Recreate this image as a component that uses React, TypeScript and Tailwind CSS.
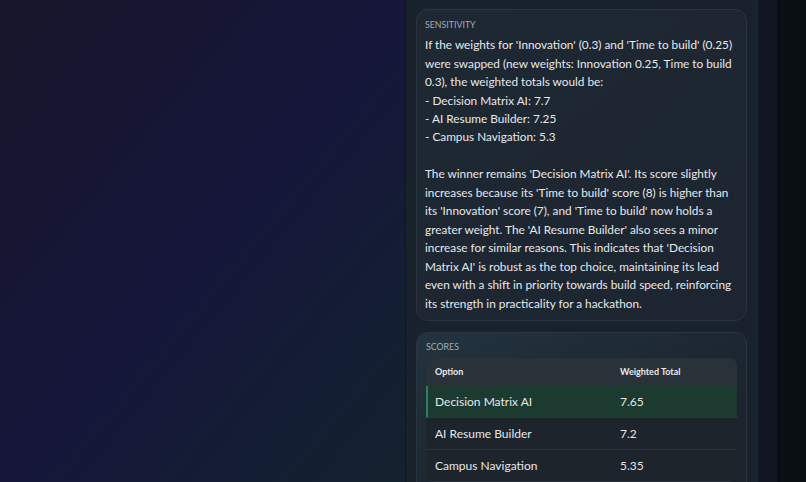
import React from "react";

const sensitivity = `If the weights for 'Innovation' (0.3) and 'Time to build' (0.25) were swapped (new weights: Innovation 0.25, Time to build 0.3), the weighted totals would be:
- Decision Matrix AI: 7.7
- AI Resume Builder: 7.25
- Campus Navigation: 5.3

The winner remains 'Decision Matrix AI'. Its score slightly increases because its 'Time to build' score (8) is higher than its 'Innovation' score (7), and 'Time to build' now holds a greater weight. The 'AI Resume Builder' also sees a minor increase for similar reasons. This indicates that 'Decision Matrix AI' is robust as the top choice, maintaining its lead even with a shift in priority towards build speed, reinforcing its strength in practicality for a hackathon.`;

const scores = [
  { option: "Decision Matrix AI", total: "7.65", winner: true },
  { option: "AI Resume Builder", total: "7.2", winner: false },
  { option: "Campus Navigation", total: "5.35", winner: false },
];

const App: React.FC = () => {
  return (
    <div
      className="flex h-[482px] w-[806px] overflow-hidden bg-[#0b1016] text-[#e4e7eb]"
      style={{ fontFamily: "Lato, 'Open Sans', sans-serif" }}
    >
      {/* Canvas area */}
      <div className="h-full w-[405px] shrink-0 bg-gradient-to-br from-[#17152a] via-[#15163a] to-[#13222e]" />

      {/* Side panel */}
      <div className="flex h-full w-[352px] shrink-0 flex-col gap-[11px] overflow-hidden border-l border-[#0f1620] bg-[#19212c] px-[10px] pt-[9px]">
        {/* Sensitivity */}
        <div className="shrink-0 rounded-xl border border-[#2b3541] bg-gradient-to-br from-[#1e2833] to-[#1c2530] px-[8px] pb-[7px] pt-[8px]">
          <div className="mb-[5px] text-[8.8px] uppercase text-[#a3abb5]">
            Sensitivity
          </div>
          <p className="whitespace-pre-wrap text-[11.8px] leading-[18.45px] text-[#e6e8eb]">
            {sensitivity}
          </p>
        </div>

        {/* Scores */}
        <div className="shrink-0 rounded-xl border border-[#2b3541] bg-gradient-to-br from-[#223440] via-[#1d2731] to-[#1b232c] px-[9px] pb-[12px] pt-[7px]">
          <div className="mb-[5px] text-[8.8px] uppercase text-[#a3abb5]">
            Scores
          </div>
          <div className="overflow-hidden rounded-lg">
            <div className="flex h-[28px] items-center bg-[#293139] px-[9px] text-[9px] font-bold text-[#e8eaed]">
              <div className="w-[185px]">Option</div>
              <div>Weighted Total</div>
            </div>
            {scores.map((s) => (
              <div
                key={s.option}
                className={
                  s.winner
                    ? "flex h-[32px] items-center border-b border-l-2 border-b-[#243a33] border-l-[#2f7f58] bg-[#1c3a2f] pl-[7px] text-[12px]"
                    : "flex h-[32px] items-center border-b border-[#2a323b] bg-[#1d242c] px-[9px] text-[12px]"
                }
              >
                <div className="w-[185px]">{s.option}</div>
                <div>{s.total}</div>
              </div>
            ))}
          </div>
        </div>
      </div>

      {/* Scroll column */}
      <div className="h-full w-[20px] shrink-0 border-l border-[#1d2430] bg-[#121622]" />
      <div className="h-full flex-1 bg-[#0a0f14]" />
    </div>
  );
};

export default App;
